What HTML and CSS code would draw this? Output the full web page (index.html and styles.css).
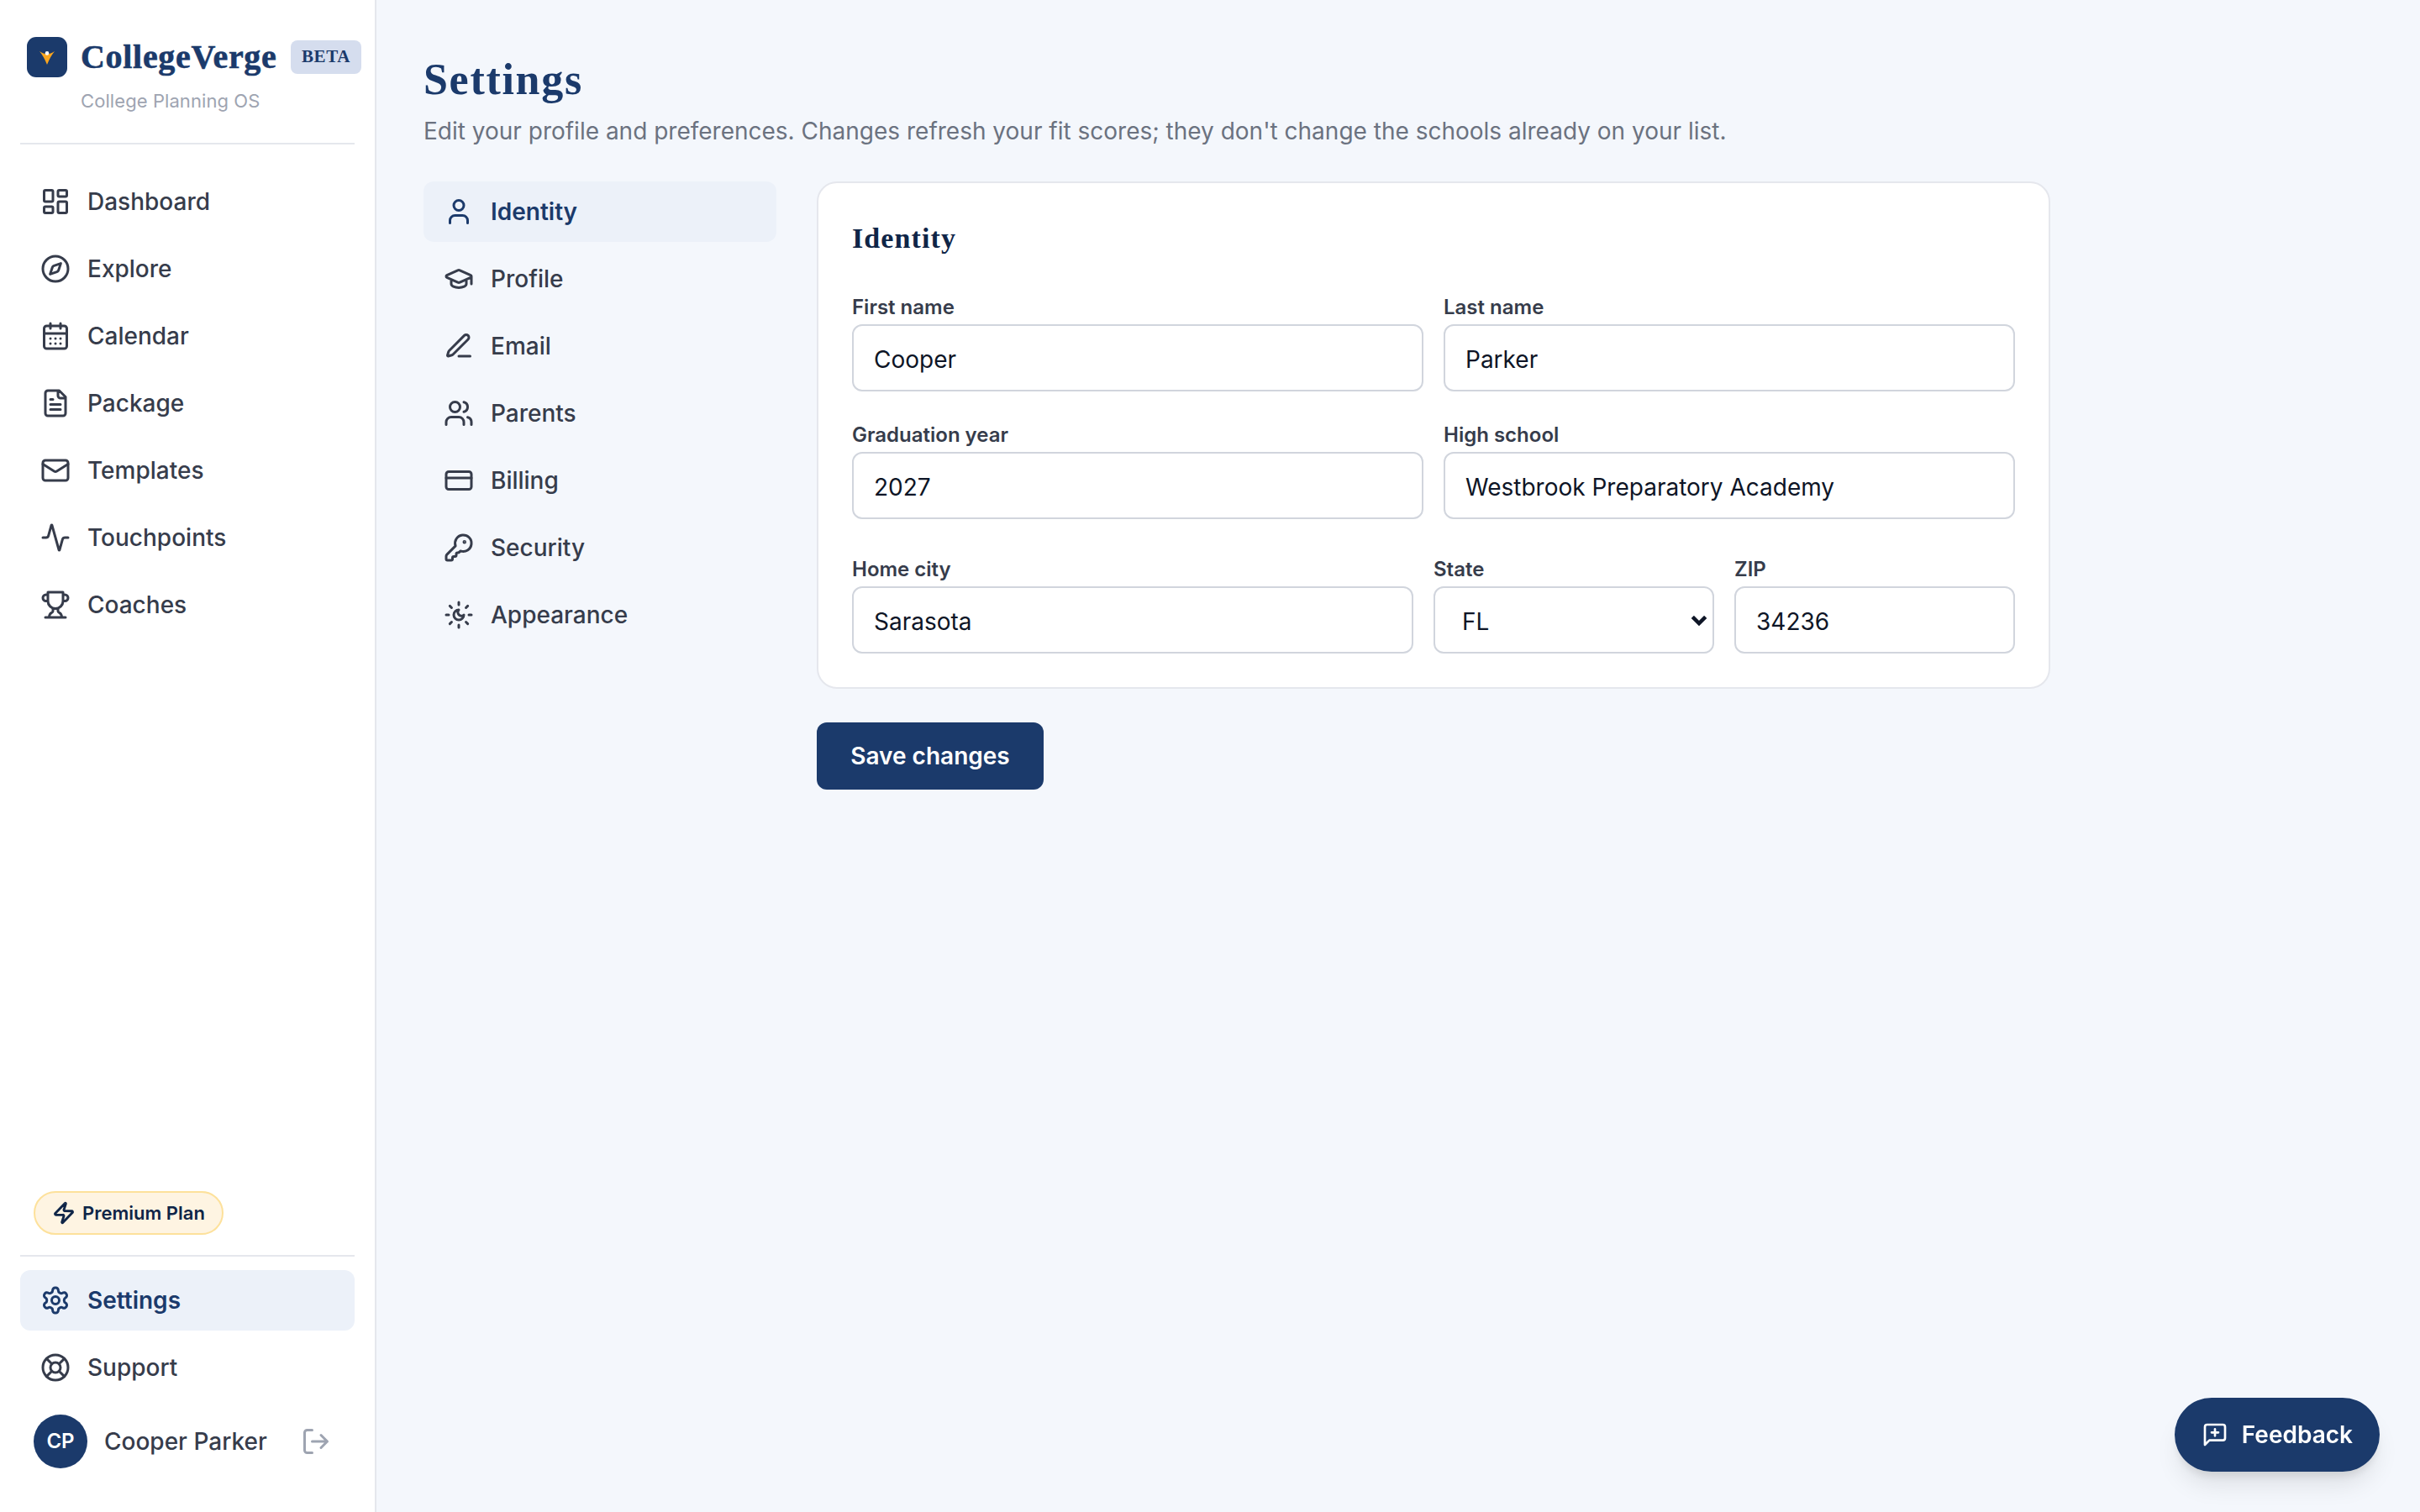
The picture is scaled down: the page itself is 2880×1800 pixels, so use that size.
FILE: index.html
```html
<!DOCTYPE html>
<html lang="en">
<head>
<meta charset="utf-8">
<title>Settings · CollegeVerge</title>
<link rel="stylesheet" href="styles.css">
</head>
<body>
<div class="app">
  <aside class="sidebar">
    <div class="brand">
      <div class="brand-row">
        <svg class="logo" viewBox="0 0 48 48"><rect width="48" height="48" rx="11" fill="#1b3a6b"/><path d="M15 17q5 3.4 9 3.4T33 17q-5 6-9 16-4-10-9-16z" fill="#f9a51f"/><circle cx="24" cy="19.4" r="2.3" fill="#fff"/></svg>
        <span class="brand-name">CollegeVerge</span>
        <span class="beta">BETA</span>
      </div>
      <div class="tagline">College Planning OS</div>
    </div>
    <nav class="nav">
      <a class="item"><svg class="icon" viewBox="0 0 24 24"><rect width="7" height="9" x="3" y="3" rx="1"/><rect width="7" height="5" x="14" y="3" rx="1"/><rect width="7" height="9" x="14" y="12" rx="1"/><rect width="7" height="5" x="3" y="16" rx="1"/></svg>Dashboard</a>
      <a class="item"><svg class="icon" viewBox="0 0 24 24"><circle cx="12" cy="12" r="10"/><path d="m16.24 7.76-1.804 5.411a2 2 0 0 1-1.265 1.265L7.76 16.24l1.804-5.411a2 2 0 0 1 1.265-1.265z"/></svg>Explore</a>
      <a class="item"><svg class="icon" viewBox="0 0 24 24"><path d="M8 2v4M16 2v4M3 10h18M8 14h.01M12 14h.01M16 14h.01M8 18h.01M12 18h.01M16 18h.01"/><rect width="18" height="18" x="3" y="4" rx="2"/></svg>Calendar</a>
      <a class="item"><svg class="icon" viewBox="0 0 24 24"><path d="M15 2H6a2 2 0 0 0-2 2v16a2 2 0 0 0 2 2h12a2 2 0 0 0 2-2V7ZM14 2v4a2 2 0 0 0 2 2h4M10 9H8M16 13H8M16 17H8"/></svg>Package</a>
      <a class="item"><svg class="icon" viewBox="0 0 24 24"><rect width="20" height="16" x="2" y="4" rx="2"/><path d="m22 7-8.97 5.7a1.94 1.94 0 0 1-2.06 0L2 7"/></svg>Templates</a>
      <a class="item"><svg class="icon" viewBox="0 0 24 24"><path d="M22 12h-2.48a2 2 0 0 0-1.93 1.46l-2.35 8.36a.25.25 0 0 1-.48 0L9.24 2.18a.25.25 0 0 0-.48 0l-2.35 8.36A2 2 0 0 1 4.49 12H2"/></svg>Touchpoints</a>
      <a class="item"><svg class="icon" viewBox="0 0 24 24"><path d="M6 9H4.5a2.5 2.5 0 0 1 0-5H6M18 9h1.5a2.5 2.5 0 0 0 0-5H18M4 22h16M10 14.66V17c0 .55-.47.98-.97 1.21C7.85 18.75 7 20.24 7 22M14 14.66V17c0 .55.47.98.97 1.21C16.15 18.75 17 20.24 17 22M18 2H6v7a6 6 0 0 0 12 0V2Z"/></svg>Coaches</a>
    </nav>
    <div class="plan"><svg class="icon" viewBox="0 0 24 24"><path d="M4 14a1 1 0 0 1-.78-1.63l9.9-10.2a.5.5 0 0 1 .86.46l-1.92 6.02A1 1 0 0 0 13 10h7a1 1 0 0 1 .78 1.63l-9.9 10.2a.5.5 0 0 1-.86-.46l1.92-6.02A1 1 0 0 0 11 14z"/></svg>Premium Plan</div>
    <div class="footer">
      <a class="item active"><svg class="icon" viewBox="0 0 24 24"><path d="M12.22 2h-.44a2 2 0 0 0-2 2v.18a2 2 0 0 1-1 1.73l-.43.25a2 2 0 0 1-2 0l-.15-.08a2 2 0 0 0-2.73.73l-.22.38a2 2 0 0 0 .73 2.73l.15.1a2 2 0 0 1 1 1.72v.51a2 2 0 0 1-1 1.74l-.15.09a2 2 0 0 0-.73 2.73l.22.38a2 2 0 0 0 2.73.73l.15-.08a2 2 0 0 1 2 0l.43.25a2 2 0 0 1 1 1.73V20a2 2 0 0 0 2 2h.44a2 2 0 0 0 2-2v-.18a2 2 0 0 1 1-1.73l.43-.25a2 2 0 0 1 2 0l.15.08a2 2 0 0 0 2.73-.73l.22-.39a2 2 0 0 0-.73-2.73l-.15-.08a2 2 0 0 1-1-1.74v-.5a2 2 0 0 1 1-1.74l.15-.09a2 2 0 0 0 .73-2.73l-.22-.38a2 2 0 0 0-2.73-.73l-.15.08a2 2 0 0 1-2 0l-.43-.25a2 2 0 0 1-1-1.73V4a2 2 0 0 0-2-2z"/><circle cx="12" cy="12" r="3"/></svg>Settings</a>
      <a class="item"><svg class="icon" viewBox="0 0 24 24"><circle cx="12" cy="12" r="10"/><path d="M4.93 4.93l4.24 4.24M14.83 9.17l4.24-4.24M14.83 14.83l4.24 4.24M9.17 14.83l-4.24 4.24"/><circle cx="12" cy="12" r="4"/></svg>Support</a>
      <div class="user">
        <span class="avatar">CP</span>
        <span class="user-name">Cooper Parker</span>
        <svg class="icon" viewBox="0 0 24 24"><path d="M9 21H5a2 2 0 0 1-2-2V5a2 2 0 0 1 2-2h4M16 17l5-5-5-5M21 12H9"/></svg>
      </div>
    </div>
  </aside>
  <main class="main">
    <h1>Settings</h1>
    <p class="lede">Edit your profile and preferences. Changes refresh your fit scores; they don't change the schools already on your list.</p>
    <div class="columns">
      <nav class="nav">
        <a class="item active"><svg class="icon" viewBox="0 0 24 24"><path d="M19 21v-2a4 4 0 0 0-4-4H9a4 4 0 0 0-4 4v2"/><circle cx="12" cy="7" r="4"/></svg>Identity</a>
        <a class="item"><svg class="icon" viewBox="0 0 24 24"><path d="M21.42 10.922a1 1 0 0 0-.019-1.838L12.83 5.18a2 2 0 0 0-1.66 0L2.6 9.08a1 1 0 0 0 0 1.832l8.57 3.908a2 2 0 0 0 1.66 0zM22 10v6M6 12.5V16a6 3 0 0 0 12 0v-3.5"/></svg>Profile</a>
        <a class="item"><svg class="icon" viewBox="0 0 24 24"><path d="M12 20h9M16.376 3.622a1 1 0 0 1 3.002 3.002L7.368 18.635a2 2 0 0 1-.855.506l-2.872.838a.5.5 0 0 1-.62-.62l.838-2.872a2 2 0 0 1 .506-.854z"/></svg>Email</a>
        <a class="item"><svg class="icon" viewBox="0 0 24 24"><path d="M16 21v-2a4 4 0 0 0-4-4H6a4 4 0 0 0-4 4v2M22 21v-2a4 4 0 0 0-3-3.87M16 3.13a4 4 0 0 1 0 7.75"/><circle cx="9" cy="7" r="4"/></svg>Parents</a>
        <a class="item"><svg class="icon" viewBox="0 0 24 24"><rect width="20" height="14" x="2" y="5" rx="2"/><path d="M2 10h20"/></svg>Billing</a>
        <a class="item"><svg class="icon" viewBox="0 0 24 24"><path d="M2.586 17.414A2 2 0 0 0 2 18.828V21a1 1 0 0 0 1 1h3a1 1 0 0 0 1-1v-1a1 1 0 0 1 1-1h1a1 1 0 0 0 1-1v-1a1 1 0 0 1 1-1h.172a2 2 0 0 0 1.414-.586l.814-.814a6.5 6.5 0 1 0-4-4z"/><circle cx="16.5" cy="7.5" r=".5" fill="currentColor"/></svg>Security</a>
        <a class="item"><svg class="icon" viewBox="0 0 24 24"><path d="M12 8a2.83 2.83 0 0 0 4 4 4 4 0 1 1-4-4M12 2v2M12 20v2M4.9 4.9l1.4 1.4M17.7 17.7l1.4 1.4M2 12h2M20 12h2M6.3 17.7l-1.4 1.4M19.1 4.9l-1.4 1.4"/></svg>Appearance</a>
      </nav>
      <form class="form">
        <section class="card">
          <h2>Identity</h2>
          <div class="grid halves">
            <div class="field"><label>First name</label><div class="input">Cooper</div></div>
            <div class="field"><label>Last name</label><div class="input">Parker</div></div>
            <div class="field"><label>Graduation year</label><div class="input">2027</div></div>
            <div class="field"><label>High school</label><div class="input">Westbrook Preparatory Academy</div></div>
          </div>
          <div class="grid address">
            <div class="field"><label>Home city</label><div class="input">Sarasota</div></div>
            <div class="field"><label>State</label><div class="input select">FL<svg class="chevron" viewBox="0 0 20 14"><path d="M2.3 1.4l7.7 7.7 7.7-7.7"/></svg></div></div>
            <div class="field"><label>ZIP</label><div class="input">34236</div></div>
          </div>
        </section>
        <button type="button" class="save">Save changes</button>
      </form>
    </div>
  </main>
  <button type="button" class="feedback"><svg class="icon" viewBox="0 0 24 24"><path d="M21 15a2 2 0 0 1-2 2H7l-4 4V5a2 2 0 0 1 2-2h14a2 2 0 0 1 2 2zM12 7v6M9 10h6"/></svg>Feedback</button>
</div>
</body>
</html>
```
FILE: styles.css
```css
:root {
  --navy: #1b3a6b;
  --ink: #0f2547;
  --text: #363c4b;
  --line: #e5e7ed;
  --tint: #ecf1f9;
  --display: "Liberation Serif", "Times New Roman", serif;
}
* { box-sizing: border-box; }
body {
  margin: 0;
  background: #f4f7fc;
  color: var(--text);
  font: 400 28px/40px Inter, "Liberation Sans", sans-serif;
}
button { font: inherit; border: 0; margin: 0; }
.app { display: flex; height: 1800px; }
.icon {
  width: 36px;
  height: 36px;
  flex: none;
  fill: none;
  stroke: currentColor;
  stroke-width: 2;
  stroke-linecap: round;
  stroke-linejoin: round;
}

/* Sidebar */
.sidebar {
  width: 448px;
  flex: none;
  display: flex;
  flex-direction: column;
  padding: 0 24px 0;
  background: #fff;
  border-right: 2px solid var(--line);
}
.brand {
  height: 172px;
  padding: 44px 0 0 8px;
  border-bottom: 2px solid var(--line);
  margin-bottom: 32px;
}
.brand-row { display: flex; align-items: center; height: 48px; gap: 16px; }
.logo { width: 48px; height: 48px; flex: none; }
.brand-name {
  width: 234px;
  flex: none;
  font: 700 40px/46px var(--display);
  letter-spacing: 0.7px;
  color: var(--navy);
  -webkit-text-stroke: 0.6px currentColor;
  white-space: nowrap;
}
.beta {
  width: 84px;
  height: 40px;
  flex: none;
  border-radius: 8px;
  background: #d5ddee;
  color: var(--navy);
  font: 700 21px/38px var(--display);
  letter-spacing: 0.6px;
  text-align: center;
}
.tagline { margin: 12px 0 0 64px; font-size: 22px; line-height: 32px; letter-spacing: 0.08px; color: #9ea4b1; }
.nav { display: flex; flex-direction: column; gap: 8px; }
.item {
  display: flex;
  align-items: center;
  gap: 20px;
  height: 72px;
  padding: 0 24px;
  border-radius: 12px;
  font-weight: 500;
}
.item.active { background: var(--tint); color: var(--navy); font-weight: 600; }
.plan {
  display: flex;
  align-items: center;
  gap: 8px;
  width: max-content;
  height: 52px;
  margin: auto 0 24px 16px;
  padding: 0 20px;
  border: 2px solid #fde19b;
  border-radius: 26px;
  background: #fef4e2;
  color: var(--ink);
  font-size: 22px;
  font-weight: 600;
}
.plan .icon { width: 28px; height: 28px; stroke-width: 2.5; }
.footer {
  display: flex;
  flex-direction: column;
  gap: 8px;
  height: 306px;
  padding-top: 16px;
  border-top: 2px solid var(--line);
}
.user { display: flex; align-items: center; padding: 12px 28px 0 16px; }
.avatar {
  width: 64px;
  height: 64px;
  border-radius: 50%;
  background: var(--navy);
  color: #fff;
  font-size: 24px;
  font-weight: 600;
  line-height: 63px;
  text-align: center;
}
.user-name { margin-left: 20px; font-weight: 500; }
.user .icon { margin-left: auto; color: #9ea4b1; }

/* Main area */
.main { flex: 1; padding: 64px 56px; }
h1 {
  height: 64px;
  margin: 0;
  font: 700 52px/62px var(--display);
  letter-spacing: 1.7px;
  color: var(--navy);
}
.lede { margin: 8px 0 0; color: #6b7280; }
.columns { display: flex; gap: 48px; width: 1936px; margin-top: 40px; }
.columns .nav { width: 420px; }
.form { flex: 1; }
.card {
  padding: 40px;
  border: 2px solid var(--line);
  border-radius: 24px;
  background: #fff;
}
h2 {
  height: 48px;
  margin: 0 0 40px;
  font: 700 34px/51px var(--display);
  letter-spacing: 1.1px;
  color: var(--ink);
}
.grid { display: grid; column-gap: 24px; row-gap: 32px; }
.halves { grid-template-columns: 1fr 1fr; }
.address { grid-template-columns: 2fr 1fr 1fr; margin-top: 40px; }
.field label {
  display: block;
  height: 40px;
  font-size: 24px;
  line-height: 40px;
  font-weight: 600;
}
.input {
  display: flex;
  align-items: center;
  height: 80px;
  padding: 4px 24px 0;
  border: 2px solid #d1d5dd;
  border-radius: 12px;
  background: #fff;
  color: #0e1526;
}
.select { justify-content: space-between; padding: 4px 6px 0 32px; }
.chevron {
  width: 20px;
  height: 14px;
  fill: none;
  stroke: currentColor;
  stroke-width: 4.5;
}
.save {
  display: block;
  width: 270px;
  height: 80px;
  margin-top: 40px;
  padding: 0;
  border-radius: 12px;
  background: var(--navy);
  color: #fff;
  font-weight: 600;
}
.feedback {
  position: fixed;
  right: 48px;
  bottom: 48px;
  display: flex;
  align-items: center;
  gap: 16px;
  height: 88px;
  padding: 0 32px;
  border-radius: 44px;
  background: var(--navy);
  color: #fff;
  font-weight: 600;
  box-shadow: 0 20px 30px -6px rgba(0, 0, 0, 0.1), 0 8px 12px -4px rgba(0, 0, 0, 0.1);
}
.feedback .icon { width: 32px; height: 32px; }
```
